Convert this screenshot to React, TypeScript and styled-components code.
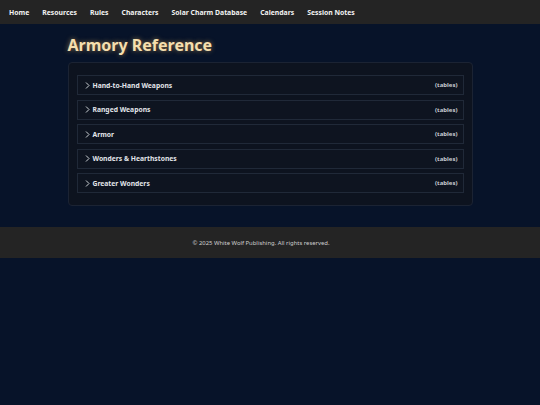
import styled, { createGlobalStyle } from "styled-components";

const GlobalStyle = createGlobalStyle`
  html, body {
    margin: 0;
    padding: 0;
    min-height: 100%;
    background: #071329;
    font-family: "Noto Sans", "Open Sans", sans-serif;
  }
`;

const Page = styled.div`
  display: flex;
  flex-direction: column;
`;

const NavBar = styled.nav`
  height: 24px;
  background: #242424;
  display: flex;
  align-items: center;
  gap: 13px;
  padding: 0 9px;
  box-sizing: border-box;
`;

const NavLink = styled.a`
  color: #f2f2f2;
  font-size: 6.85px;
  font-weight: 700;
  text-decoration: none;
  white-space: nowrap;
`;

const Main = styled.main`
  width: 405px;
  margin: 0 auto;
  padding: 11px 0 21px;
`;

const Heading = styled.h1`
  margin: 0 0 7px;
  font-size: 16px;
  font-weight: 700;
  line-height: 20px;
  color: #f5dfae;
  text-shadow: 0 0 5px rgba(255, 196, 96, 0.55);
`;

const Card = styled.section`
  background: #0d131f;
  border: 1px solid #1b2333;
  border-radius: 4px;
  padding: 12px 8px;
  display: flex;
  flex-direction: column;
  gap: 4.5px;
`;

const Row = styled.div`
  height: 20px;
  box-sizing: border-box;
  border: 1px solid #202938;
  background: #0e1420;
  display: flex;
  align-items: center;
  padding: 0 5px 0 7px;
  color: #e2e5ea;
`;

const Chevron = styled.svg`
  width: 5px;
  height: 7px;
  margin-right: 3px;
  flex-shrink: 0;
`;

const RowTitle = styled.span`
  flex: 1;
  font-size: 6.75px;
  font-weight: 700;
`;

const RowTag = styled.span`
  font-size: 6px;
  font-weight: 700;
  color: #c8ccd3;
`;

const Footer = styled.footer`
  height: 31px;
  background: #242424;
  display: flex;
  align-items: center;
  justify-content: center;
  padding-right: 18px;
  color: #cfcfcf;
  font-size: 5.9px;
`;

const sections = [
  "Hand-to-Hand Weapons",
  "Ranged Weapons",
  "Armor",
  "Wonders & Hearthstones",
  "Greater Wonders",
];

const links = [
  "Home",
  "Resources",
  "Rules",
  "Characters",
  "Solar Charm Database",
  "Calendars",
  "Session Notes",
];

export default function App() {
  return (
    <Page>
      <GlobalStyle />
      <NavBar>
        {links.map((l) => (
          <NavLink key={l} href="#">
            {l}
          </NavLink>
        ))}
      </NavBar>
      <Main>
        <Heading>Armory Reference</Heading>
        <Card>
          {sections.map((s) => (
            <Row key={s}>
              <Chevron viewBox="0 0 5 7">
                <path d="M1 0.5 L4 3.5 L1 6.5" fill="none" stroke="#e2e5ea" strokeWidth="0.9" />
              </Chevron>
              <RowTitle>{s}</RowTitle>
              <RowTag>(tables)</RowTag>
            </Row>
          ))}
        </Card>
      </Main>
      <Footer>© 2025 White Wolf Publishing. All rights reserved.</Footer>
    </Page>
  );
}
